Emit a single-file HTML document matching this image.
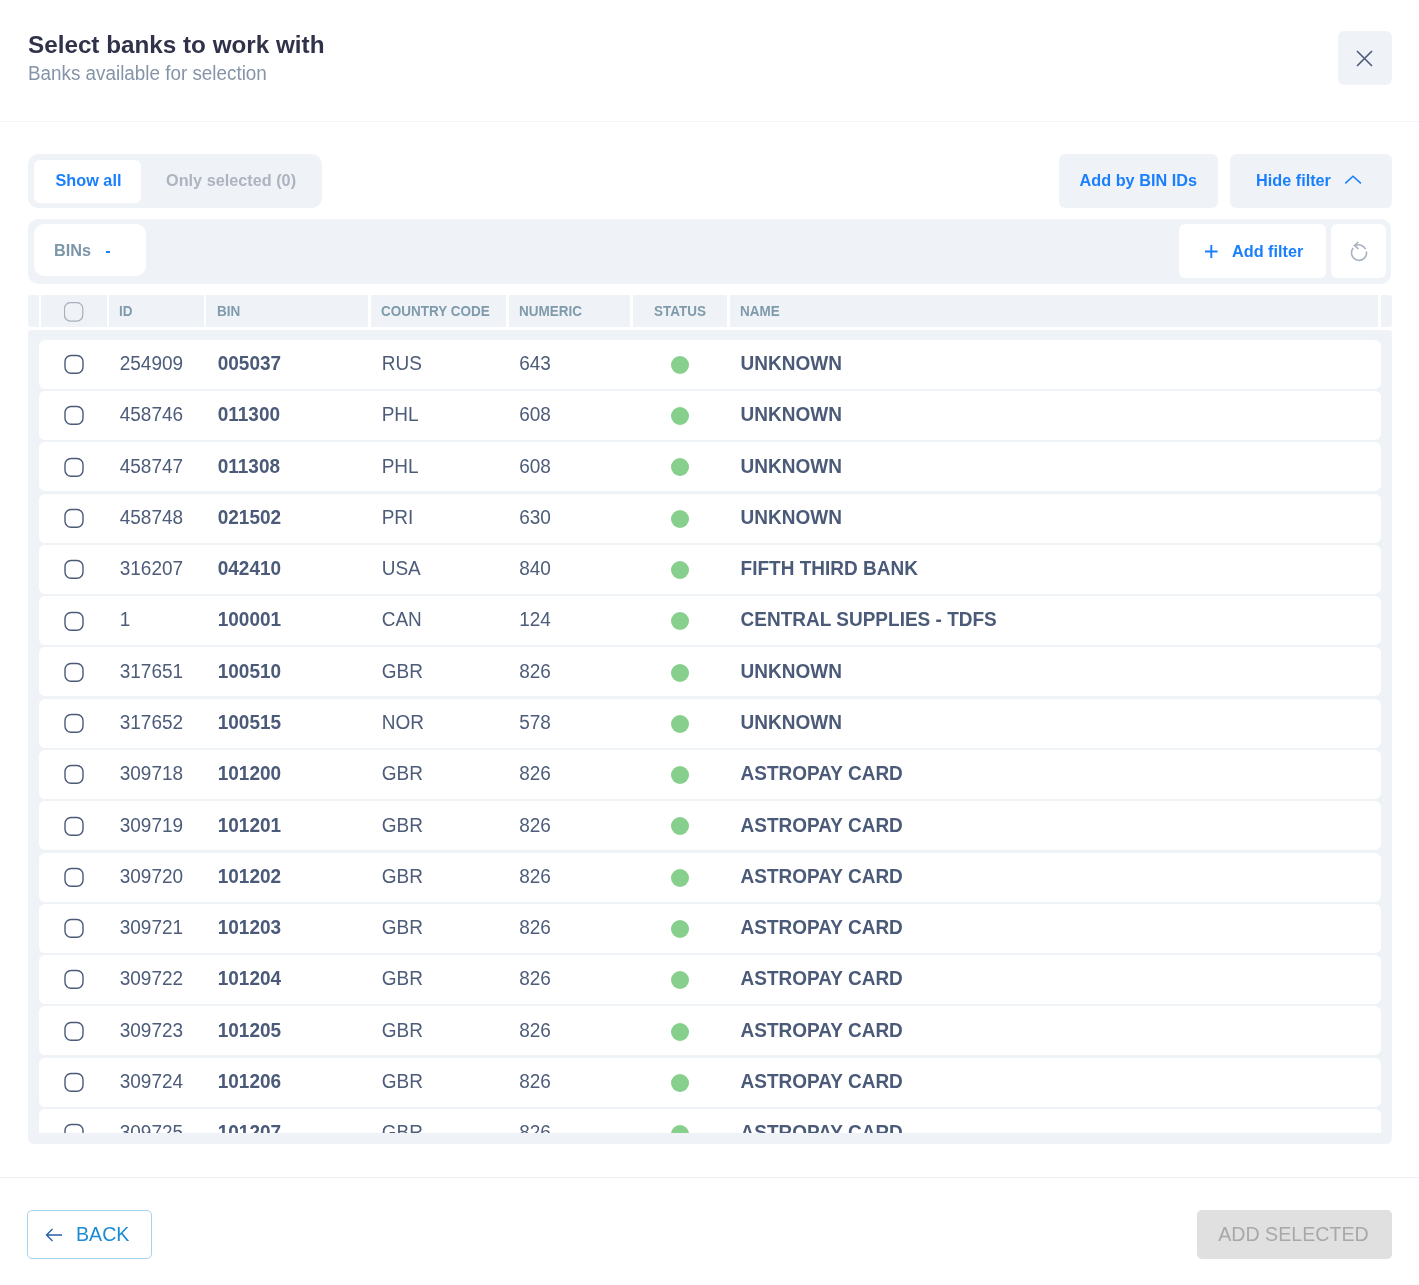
<!DOCTYPE html>
<html>
<head>
<meta charset="utf-8">
<style>
*{box-sizing:border-box;margin:0;padding:0}
html,body{width:1419px;height:1285px;overflow:hidden;background:#fff}
body{position:relative;font-family:"Liberation Sans",sans-serif;color:#4a5a78}
.a{position:absolute}
.t{position:absolute;white-space:pre;line-height:1;transform-origin:0 0.8465em;transform:scaleY(1.06)}
.bg{background:#eff3f8}
.title{transform:none;left:28px;top:33px;font-size:24.25px;font-weight:bold;color:#30324a}
.sub{left:28px;top:65px;font-size:18.85px;color:#8594a8}
.blue{color:#1a7ffc}
.b16{font-size:16.25px;font-weight:bold}
.hd{font-size:13.5px;font-weight:bold;color:#7f9aab}
.cell{font-size:19px;color:#4d5c79}
.cellb{font-size:19px;font-weight:bold;color:#4a5a78}
.row{position:absolute;left:39px;width:1342px;height:49px;background:#fff;border-radius:6px}
.cb{position:absolute;left:64px;overflow:visible}
.dot{position:absolute;left:670.5px;width:18px;height:18px;border-radius:50%;background:#86cf8c}
</style>
</head>
<body>
<div id="page" style="position:absolute;left:0;top:0;width:1419px;height:1285px;background:#fff;will-change:transform">
<!-- header -->
<div class="t title">Select banks to work with</div>
<div class="t sub">Banks available for selection</div>
<div class="a bg" style="left:1338px;top:31px;width:54px;height:54px;border-radius:6px"></div>
<svg class="a" style="left:1356px;top:50px" width="17" height="17" viewBox="0 0 17 17"><path d="M1 1L16 16M16 1L1 16" stroke="#4a5a78" stroke-width="1.6" fill="none"/></svg>
<div class="a" style="left:0;top:121px;width:1419px;height:1px;background:#f0f3f8"></div>

<!-- tabs -->
<div class="a bg" style="left:28px;top:154px;width:294px;height:54px;border-radius:10px"></div>
<div class="a" style="left:33.5px;top:160px;width:107.7px;height:43px;border-radius:6px;background:#fff"></div>
<div class="t b16 blue" style="left:55.5px;top:172px">Show all</div>
<div class="t b16" style="left:166px;top:172px;color:#adb4c0">Only selected (0)</div>

<div class="a bg" style="left:1059px;top:154px;width:159px;height:54px;border-radius:6px"></div>
<div class="t b16 blue" style="left:1079.6px;top:172px">Add by BIN IDs</div>
<div class="a bg" style="left:1229.5px;top:154px;width:162px;height:54px;border-radius:6px"></div>
<div class="t b16 blue" style="left:1256px;top:172px">Hide filter</div>
<svg class="a" style="left:1344px;top:174px" width="18" height="11" viewBox="0 0 18 11"><path d="M1.3 9.4L9 2.2L16.9 9.4" stroke="#1a7ffc" stroke-width="1.55" fill="none"/></svg>

<!-- filter bar -->
<div class="a bg" style="left:28px;top:219px;width:1363px;height:65px;border-radius:10px"></div>
<div class="a" style="left:34px;top:223.7px;width:111.5px;height:52.3px;border-radius:10px;background:#fff"></div>
<div class="t b16" style="left:54px;top:242px;color:#7b96a8">BINs</div>
<div class="a" style="left:105.8px;top:251px;width:4.6px;height:1.9px;background:#1a7ffc"></div>
<div class="a" style="left:1178.5px;top:224px;width:147.2px;height:54px;border-radius:6px;background:#fff"></div>
<svg class="a" style="left:1204.6px;top:245px" width="13" height="13" viewBox="0 0 13 13"><path d="M6.3 0V13M0 6.5H12.6" stroke="#1a7ffc" stroke-width="1.9" fill="none"/></svg>
<div class="t b16 blue" style="left:1232px;top:243px">Add filter</div>
<div class="a" style="left:1331.3px;top:224px;width:54.4px;height:54px;border-radius:6px;background:#fff"></div>
<svg class="a" style="left:1340px;top:232px" width="36" height="36" viewBox="0 0 36 36"><g stroke="#a9b2c0" stroke-width="1.6" fill="none" stroke-linecap="butt"><path d="M26.4 19.5A7.5 7.5 0 1 1 13.25 16"/><path d="M25.6 17.2A8.2 8.2 0 0 0 15.2 13.4"/><path d="M18.3 10L14.5 13.5L18.5 16.8"/></g></svg>

<!-- table header -->
<div class="a bg" style="left:28px;top:295px;width:10.5px;height:32px;border-radius:3px 0 0 3px"></div>
<div class="a bg" style="left:41px;top:295px;width:65.5px;height:32px"></div>
<div class="a bg" style="left:108.5px;top:295px;width:95px;height:32px"></div>
<div class="a bg" style="left:205.5px;top:295px;width:162px;height:32px"></div>
<div class="a bg" style="left:370.5px;top:295px;width:135px;height:32px"></div>
<div class="a bg" style="left:508.5px;top:295px;width:121.5px;height:32px"></div>
<div class="a bg" style="left:632.5px;top:295px;width:94px;height:32px"></div>
<div class="a bg" style="left:729.5px;top:295px;width:648px;height:32px"></div>
<div class="a bg" style="left:1380.5px;top:295px;width:11px;height:32px;border-radius:0 3px 3px 0"></div>
<svg class="a" style="left:64px;top:302px" width="21" height="21" viewBox="0 0 21 21"><rect x="0.45" y="0.6" width="18.35" height="18.45" rx="6" fill="none" stroke="#a9b1be" stroke-width="1.25"/></svg>
<div class="t hd" style="left:119px;top:305px">ID</div>
<div class="t hd" style="left:217px;top:305px">BIN</div>
<div class="t hd" style="left:381px;top:305px">COUNTRY CODE</div>
<div class="t hd" style="left:519px;top:305px">NUMERIC</div>
<div class="t hd" style="left:654px;top:305px">STATUS</div>
<div class="t hd" style="left:740px;top:305px">NAME</div>

<!-- table body -->
<div class="a bg" style="left:28px;top:330px;width:1363.5px;height:814px;border-radius:3px 3px 6px 6px"></div>
<div id="rows" class="a" style="left:0;top:0;width:1419px;height:1133px;overflow:hidden">
<div class="row" style="top:339.70px"></div>
<svg class="cb" style="top:355.10px" width="21" height="20" viewBox="0 0 21 20"><rect x="1.0" y="0.5" width="18" height="17.75" rx="6" fill="none" stroke="#4b5a77" stroke-width="1.4"/></svg>
<div class="t cell" style="left:119.7px;top:354.05px">254909</div>
<div class="t cellb" style="left:217.7px;top:354.05px">005037</div>
<div class="t cell" style="left:381.7px;top:354.05px">RUS</div>
<div class="t cell" style="left:519.2px;top:354.05px">643</div>
<div class="dot" style="top:355.90px"></div>
<div class="t cellb" style="left:740.6px;top:354.05px">UNKNOWN</div>
<div class="row" style="top:390.98px"></div>
<svg class="cb" style="top:406.38px" width="21" height="20" viewBox="0 0 21 20"><rect x="1.0" y="0.5" width="18" height="17.75" rx="6" fill="none" stroke="#4b5a77" stroke-width="1.4"/></svg>
<div class="t cell" style="left:119.7px;top:405.33px">458746</div>
<div class="t cellb" style="left:217.7px;top:405.33px">011300</div>
<div class="t cell" style="left:381.7px;top:405.33px">PHL</div>
<div class="t cell" style="left:519.2px;top:405.33px">608</div>
<div class="dot" style="top:407.18px"></div>
<div class="t cellb" style="left:740.6px;top:405.33px">UNKNOWN</div>
<div class="row" style="top:442.26px"></div>
<svg class="cb" style="top:457.66px" width="21" height="20" viewBox="0 0 21 20"><rect x="1.0" y="0.5" width="18" height="17.75" rx="6" fill="none" stroke="#4b5a77" stroke-width="1.4"/></svg>
<div class="t cell" style="left:119.7px;top:456.61px">458747</div>
<div class="t cellb" style="left:217.7px;top:456.61px">011308</div>
<div class="t cell" style="left:381.7px;top:456.61px">PHL</div>
<div class="t cell" style="left:519.2px;top:456.61px">608</div>
<div class="dot" style="top:458.46px"></div>
<div class="t cellb" style="left:740.6px;top:456.61px">UNKNOWN</div>
<div class="row" style="top:493.54px"></div>
<svg class="cb" style="top:508.94px" width="21" height="20" viewBox="0 0 21 20"><rect x="1.0" y="0.5" width="18" height="17.75" rx="6" fill="none" stroke="#4b5a77" stroke-width="1.4"/></svg>
<div class="t cell" style="left:119.7px;top:507.89px">458748</div>
<div class="t cellb" style="left:217.7px;top:507.89px">021502</div>
<div class="t cell" style="left:381.7px;top:507.89px">PRI</div>
<div class="t cell" style="left:519.2px;top:507.89px">630</div>
<div class="dot" style="top:509.74px"></div>
<div class="t cellb" style="left:740.6px;top:507.89px">UNKNOWN</div>
<div class="row" style="top:544.82px"></div>
<svg class="cb" style="top:560.22px" width="21" height="20" viewBox="0 0 21 20"><rect x="1.0" y="0.5" width="18" height="17.75" rx="6" fill="none" stroke="#4b5a77" stroke-width="1.4"/></svg>
<div class="t cell" style="left:119.7px;top:559.17px">316207</div>
<div class="t cellb" style="left:217.7px;top:559.17px">042410</div>
<div class="t cell" style="left:381.7px;top:559.17px">USA</div>
<div class="t cell" style="left:519.2px;top:559.17px">840</div>
<div class="dot" style="top:561.02px"></div>
<div class="t cellb" style="left:740.6px;top:559.17px">FIFTH THIRD BANK</div>
<div class="row" style="top:596.10px"></div>
<svg class="cb" style="top:611.50px" width="21" height="20" viewBox="0 0 21 20"><rect x="1.0" y="0.5" width="18" height="17.75" rx="6" fill="none" stroke="#4b5a77" stroke-width="1.4"/></svg>
<div class="t cell" style="left:119.7px;top:610.45px">1</div>
<div class="t cellb" style="left:217.7px;top:610.45px">100001</div>
<div class="t cell" style="left:381.7px;top:610.45px">CAN</div>
<div class="t cell" style="left:519.2px;top:610.45px">124</div>
<div class="dot" style="top:612.30px"></div>
<div class="t cellb" style="left:740.6px;top:610.45px">CENTRAL SUPPLIES - TDFS</div>
<div class="row" style="top:647.38px"></div>
<svg class="cb" style="top:662.78px" width="21" height="20" viewBox="0 0 21 20"><rect x="1.0" y="0.5" width="18" height="17.75" rx="6" fill="none" stroke="#4b5a77" stroke-width="1.4"/></svg>
<div class="t cell" style="left:119.7px;top:661.73px">317651</div>
<div class="t cellb" style="left:217.7px;top:661.73px">100510</div>
<div class="t cell" style="left:381.7px;top:661.73px">GBR</div>
<div class="t cell" style="left:519.2px;top:661.73px">826</div>
<div class="dot" style="top:663.58px"></div>
<div class="t cellb" style="left:740.6px;top:661.73px">UNKNOWN</div>
<div class="row" style="top:698.66px"></div>
<svg class="cb" style="top:714.06px" width="21" height="20" viewBox="0 0 21 20"><rect x="1.0" y="0.5" width="18" height="17.75" rx="6" fill="none" stroke="#4b5a77" stroke-width="1.4"/></svg>
<div class="t cell" style="left:119.7px;top:713.01px">317652</div>
<div class="t cellb" style="left:217.7px;top:713.01px">100515</div>
<div class="t cell" style="left:381.7px;top:713.01px">NOR</div>
<div class="t cell" style="left:519.2px;top:713.01px">578</div>
<div class="dot" style="top:714.86px"></div>
<div class="t cellb" style="left:740.6px;top:713.01px">UNKNOWN</div>
<div class="row" style="top:749.94px"></div>
<svg class="cb" style="top:765.34px" width="21" height="20" viewBox="0 0 21 20"><rect x="1.0" y="0.5" width="18" height="17.75" rx="6" fill="none" stroke="#4b5a77" stroke-width="1.4"/></svg>
<div class="t cell" style="left:119.7px;top:764.29px">309718</div>
<div class="t cellb" style="left:217.7px;top:764.29px">101200</div>
<div class="t cell" style="left:381.7px;top:764.29px">GBR</div>
<div class="t cell" style="left:519.2px;top:764.29px">826</div>
<div class="dot" style="top:766.14px"></div>
<div class="t cellb" style="left:740.6px;top:764.29px">ASTROPAY CARD</div>
<div class="row" style="top:801.22px"></div>
<svg class="cb" style="top:816.62px" width="21" height="20" viewBox="0 0 21 20"><rect x="1.0" y="0.5" width="18" height="17.75" rx="6" fill="none" stroke="#4b5a77" stroke-width="1.4"/></svg>
<div class="t cell" style="left:119.7px;top:815.57px">309719</div>
<div class="t cellb" style="left:217.7px;top:815.57px">101201</div>
<div class="t cell" style="left:381.7px;top:815.57px">GBR</div>
<div class="t cell" style="left:519.2px;top:815.57px">826</div>
<div class="dot" style="top:817.42px"></div>
<div class="t cellb" style="left:740.6px;top:815.57px">ASTROPAY CARD</div>
<div class="row" style="top:852.50px"></div>
<svg class="cb" style="top:867.90px" width="21" height="20" viewBox="0 0 21 20"><rect x="1.0" y="0.5" width="18" height="17.75" rx="6" fill="none" stroke="#4b5a77" stroke-width="1.4"/></svg>
<div class="t cell" style="left:119.7px;top:866.85px">309720</div>
<div class="t cellb" style="left:217.7px;top:866.85px">101202</div>
<div class="t cell" style="left:381.7px;top:866.85px">GBR</div>
<div class="t cell" style="left:519.2px;top:866.85px">826</div>
<div class="dot" style="top:868.70px"></div>
<div class="t cellb" style="left:740.6px;top:866.85px">ASTROPAY CARD</div>
<div class="row" style="top:903.78px"></div>
<svg class="cb" style="top:919.18px" width="21" height="20" viewBox="0 0 21 20"><rect x="1.0" y="0.5" width="18" height="17.75" rx="6" fill="none" stroke="#4b5a77" stroke-width="1.4"/></svg>
<div class="t cell" style="left:119.7px;top:918.13px">309721</div>
<div class="t cellb" style="left:217.7px;top:918.13px">101203</div>
<div class="t cell" style="left:381.7px;top:918.13px">GBR</div>
<div class="t cell" style="left:519.2px;top:918.13px">826</div>
<div class="dot" style="top:919.98px"></div>
<div class="t cellb" style="left:740.6px;top:918.13px">ASTROPAY CARD</div>
<div class="row" style="top:955.06px"></div>
<svg class="cb" style="top:970.46px" width="21" height="20" viewBox="0 0 21 20"><rect x="1.0" y="0.5" width="18" height="17.75" rx="6" fill="none" stroke="#4b5a77" stroke-width="1.4"/></svg>
<div class="t cell" style="left:119.7px;top:969.41px">309722</div>
<div class="t cellb" style="left:217.7px;top:969.41px">101204</div>
<div class="t cell" style="left:381.7px;top:969.41px">GBR</div>
<div class="t cell" style="left:519.2px;top:969.41px">826</div>
<div class="dot" style="top:971.26px"></div>
<div class="t cellb" style="left:740.6px;top:969.41px">ASTROPAY CARD</div>
<div class="row" style="top:1006.34px"></div>
<svg class="cb" style="top:1021.74px" width="21" height="20" viewBox="0 0 21 20"><rect x="1.0" y="0.5" width="18" height="17.75" rx="6" fill="none" stroke="#4b5a77" stroke-width="1.4"/></svg>
<div class="t cell" style="left:119.7px;top:1020.69px">309723</div>
<div class="t cellb" style="left:217.7px;top:1020.69px">101205</div>
<div class="t cell" style="left:381.7px;top:1020.69px">GBR</div>
<div class="t cell" style="left:519.2px;top:1020.69px">826</div>
<div class="dot" style="top:1022.54px"></div>
<div class="t cellb" style="left:740.6px;top:1020.69px">ASTROPAY CARD</div>
<div class="row" style="top:1057.62px"></div>
<svg class="cb" style="top:1073.02px" width="21" height="20" viewBox="0 0 21 20"><rect x="1.0" y="0.5" width="18" height="17.75" rx="6" fill="none" stroke="#4b5a77" stroke-width="1.4"/></svg>
<div class="t cell" style="left:119.7px;top:1071.97px">309724</div>
<div class="t cellb" style="left:217.7px;top:1071.97px">101206</div>
<div class="t cell" style="left:381.7px;top:1071.97px">GBR</div>
<div class="t cell" style="left:519.2px;top:1071.97px">826</div>
<div class="dot" style="top:1073.82px"></div>
<div class="t cellb" style="left:740.6px;top:1071.97px">ASTROPAY CARD</div>
<div class="row" style="top:1108.90px"></div>
<svg class="cb" style="top:1124.30px" width="21" height="20" viewBox="0 0 21 20"><rect x="1.0" y="0.5" width="18" height="17.75" rx="6" fill="none" stroke="#4b5a77" stroke-width="1.4"/></svg>
<div class="t cell" style="left:119.7px;top:1123.25px">309725</div>
<div class="t cellb" style="left:217.7px;top:1123.25px">101207</div>
<div class="t cell" style="left:381.7px;top:1123.25px">GBR</div>
<div class="t cell" style="left:519.2px;top:1123.25px">826</div>
<div class="dot" style="top:1125.10px"></div>
<div class="t cellb" style="left:740.6px;top:1123.25px">ASTROPAY CARD</div>
</div>

<!-- footer -->
<div class="a" style="left:0;top:1177px;width:1419px;height:1px;background:#eef1f5"></div>
<div class="a" style="left:27.2px;top:1210px;width:124.5px;height:49px;border:1px solid #a5d4f1;border-radius:5px"></div>
<svg class="a" style="left:45px;top:1228px" width="18" height="14" viewBox="0 0 18 14"><path d="M17 7H1.5M7.5 1L1.5 7L7.5 13" stroke="#2a5ea8" stroke-width="1.35" fill="none"/></svg>
<div class="t" style="left:76px;top:1225px;font-size:19.6px;color:#1b8bd6">BACK</div>
<div class="a" style="left:1196.7px;top:1210px;width:195px;height:49px;background:#e0e0e0;border-radius:5px"></div>
<div class="t" style="left:1218.2px;top:1225px;font-size:19.65px;color:#a8a8a8">ADD SELECTED</div>
</div>
</body>
</html>
